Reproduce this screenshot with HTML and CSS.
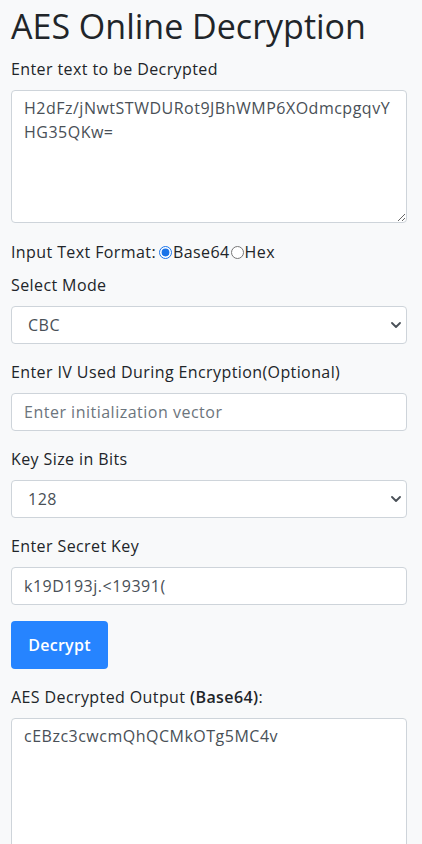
FILE: index.html
```html
<!DOCTYPE html>
<html lang="en">
<head>
<meta charset="utf-8">
<title>AES Online Decryption</title>
<link rel="stylesheet" href="styles.css">
</head>
<body>
<main class="page">
  <h1 class="title">AES Online Decryption</h1>

  <div class="field">
    <label class="label" for="cipher">Enter text to be Decrypted</label>
    <textarea id="cipher" class="control area">H2dFz/jNwtSTWDURot9JBhWMP6XOdmcpgqvY
HG35QKw=</textarea>
  </div>

  <div class="format-row">
    <span>Input Text Format:</span>
    <input type="radio" name="fmt" id="b64" checked><label for="b64">Base64</label>
    <input type="radio" name="fmt" id="hex"><label for="hex">Hex</label>
  </div>

  <div class="field">
    <label class="label" for="mode">Select Mode</label>
    <select id="mode" class="control select"><option>CBC</option><option>ECB</option></select>
  </div>

  <div class="field">
    <label class="label" for="iv">Enter IV Used During Encryption(Optional)</label>
    <input id="iv" class="control" type="text" placeholder="Enter initialization vector">
  </div>

  <div class="field">
    <label class="label" for="size">Key Size in Bits</label>
    <select id="size" class="control select"><option>128</option><option>192</option><option>256</option></select>
  </div>

  <div class="field">
    <label class="label" for="key">Enter Secret Key</label>
    <input id="key" class="control" type="text" value="k19D193j.&lt;19391(">
  </div>

  <button class="btn" type="button">Decrypt</button>

  <div class="field">
    <label class="label" for="out">AES Decrypted Output <b>(Base64)</b>:</label>
    <textarea id="out" class="control area out">cEBzc3cwcmQhQCMkOTg5MC4v</textarea>
  </div>
</main>
</body>
</html>
```

FILE: styles.css
```css
html, body {
  margin: 0;
  padding: 0;
  background: #f8f9fa;
}
body {
  font-family: "Open Sans", "Liberation Sans", sans-serif;
  color: #212529;
  font-size: 16px;
  letter-spacing: 0.4px;
}
.page {
  padding: 0 15px 0 11px;
  display: flex;
  flex-direction: column;
}
.title {
  margin: 6px 0 11px;
  font-size: 34px;
  line-height: 40px;
  font-weight: 500;
  letter-spacing: 0;
  color: #212529;
}
.field {
  display: flex;
  flex-direction: column;
  margin-bottom: 16px;
}
.label {
  display: block;
  font-size: 16px;
  line-height: 24px;
  margin-bottom: 9px;
}
.label b {
  font-weight: 600;
}
.control {
  box-sizing: border-box;
  width: 100%;
  height: 38px;
  border: 1px solid #ced4da;
  border-radius: 4px;
  background: #fff;
  padding: 6px 12px;
  font-family: inherit;
  font-size: 16px;
  letter-spacing: 0.5px;
  line-height: 24px;
  color: #495057;
  margin: 0;
}
.control::placeholder {
  color: #6c757d;
}
.area {
  height: 133px;
  resize: vertical;
  padding-top: 5px;
}
.out {
  height: 140px;
}
.select {
  appearance: none;
  -webkit-appearance: none;
  padding-left: 16px;
  background-image: url("data:image/svg+xml,%3Csvg xmlns='http://www.w3.org/2000/svg' width='10' height='6' viewBox='0 0 10 6'%3E%3Cpath d='M1 1l4 4 4-4' fill='none' stroke='%23495057' stroke-width='1.8' stroke-linecap='round' stroke-linejoin='round'/%3E%3C/svg%3E");
  background-repeat: no-repeat;
  background-position: right 5px center;
  background-size: 10px 6px;
}
.format-row {
  display: flex;
  align-items: center;
  margin: 1px 0 9px;
  line-height: 24px;
  font-size: 16px;
}
.format-row span {
  margin-right: 3px;
}
.format-row input {
  margin: 0 1px 0 0;
  width: 13px;
  height: 13px;
  accent-color: #1a73e8;
}
.format-row label {
  margin-right: 1px;
}
.btn {
  align-self: flex-start;
  width: 97px;
  height: 48px;
  border: none;
  border-radius: 4px;
  background: #2684ff;
  color: #fff;
  font-family: inherit;
  font-size: 16px;
  font-weight: 600;
  letter-spacing: 0.3px;
  margin: 0 0 16px;
  padding: 0;
}
```
